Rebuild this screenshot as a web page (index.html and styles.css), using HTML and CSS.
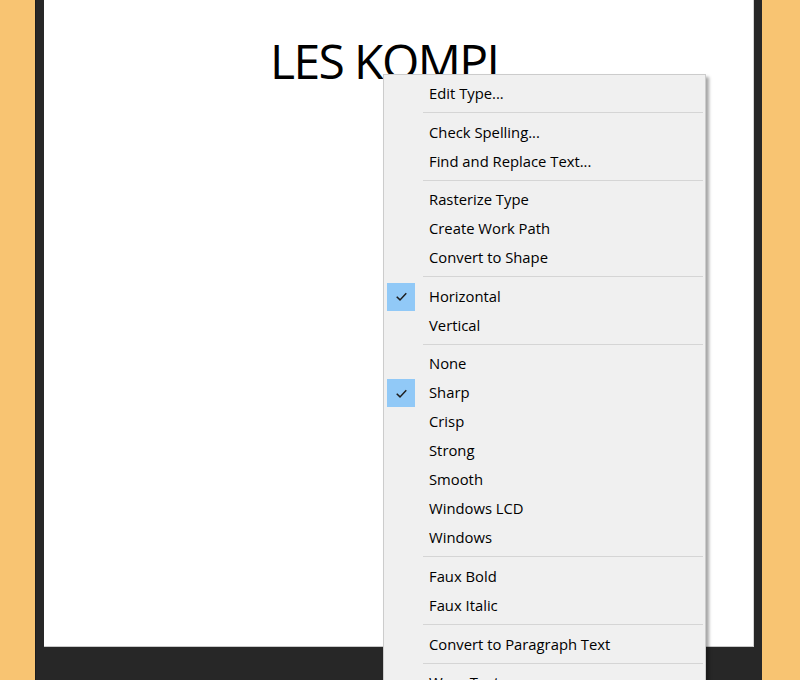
FILE: index.html
```html
<!DOCTYPE html>
<html lang="en">
<head>
  <meta charset="UTF-8">
  <meta name="viewport" content="width=device-width, initial-scale=1.0">
  <title>Les Kompi</title>
  <link rel="stylesheet" href="styles.css">
</head>
<body>
  <div class="frame">
    <div class="canvas">
      <h1 class="title">LES KOMPI</h1>
    </div>
  </div>

  <!-- menu de contexto do texto -->
  <div class="menu">
    <div class="item">Edit Type...</div>
    <div class="sep"></div>
    <div class="item">Check Spelling...</div>
    <div class="item">Find and Replace Text...</div>
    <div class="sep"></div>
    <div class="item">Rasterize Type</div>
    <div class="item">Create Work Path</div>
    <div class="item">Convert to Shape</div>
    <div class="sep"></div>
    <div class="item checked">
      <span class="check"><svg viewBox="0 0 16 16"><path d="M3.5 8.2 6.6 11.2 12.5 5" /></svg></span>
      Horizontal
    </div>
    <div class="item">Vertical</div>
    <div class="sep"></div>
    <div class="item">None</div>
    <div class="item checked">
      <span class="check"><svg viewBox="0 0 16 16"><path d="M3.5 8.2 6.6 11.2 12.5 5" /></svg></span>
      Sharp
    </div>
    <div class="item">Crisp</div>
    <div class="item">Strong</div>
    <div class="item">Smooth</div>
    <div class="item">Windows LCD</div>
    <div class="item">Windows</div>
    <div class="sep"></div>
    <div class="item">Faux Bold</div>
    <div class="item">Faux Italic</div>
    <div class="sep"></div>
    <div class="item">Convert to Paragraph Text</div>
    <div class="sep"></div>
    <div class="item">Warp Text...</div>
  </div>
</body>
</html>
```

FILE: styles.css
```css
body {
  margin: 0;
  padding: 0;
  height: 680px;
  overflow: hidden;
  background-color: #f8c472;
  font-family: "Open Sans", Arial, sans-serif;
  position: relative;
}
.frame {
  margin-left: 35px;
  width: 710px;
  height: 680px;
  padding: 0 8px;
  background-color: #272727;
  border-left: 1px solid #1c1c1c;
}
.canvas {
  width: 709px;
  height: 646px;
  background-color: #fff;
  border-bottom: 1px solid #c9c9c9;
  border-right: 1px solid #d4d4d4;
  overflow: hidden;
}
.title {
  margin: 0;
  padding: 31px 0 0 226px;
  font-family: "Open Sans", Arial, sans-serif;
  font-weight: 400;
  font-size: 48px;
  line-height: 60px;
  color: #000;
  letter-spacing: -1.6px;
}
.menu {
  position: absolute;
  top: 74px;
  left: 383px;
  width: 323px;
  padding: 4px 2px 0 3px;
  box-sizing: border-box;
  background-color: #f0f0f0;
  border: 1px solid #cccccc;
  box-shadow: 3px 3px 3px rgba(0, 0, 0, 0.35);
  font-size: 14.8px;
  color: #000;
}
.item {
  position: relative;
  height: 29px;
  line-height: 29px;
  padding-left: 42px;
  white-space: nowrap;
}
.check {
  position: absolute;
  left: 0;
  top: 1px;
  width: 28px;
  height: 28px;
  background-color: #91c9f7;
  display: flex;
  align-items: center;
  justify-content: center;
}
.check svg {
  width: 17px;
  height: 17px;
  fill: none;
  stroke: #1e1e1e;
  stroke-width: 1.4;
}
.sep {
  height: 1px;
  margin: 4px 0 4.6px 36px;
  background-color: #d5d5d5;
}
```
